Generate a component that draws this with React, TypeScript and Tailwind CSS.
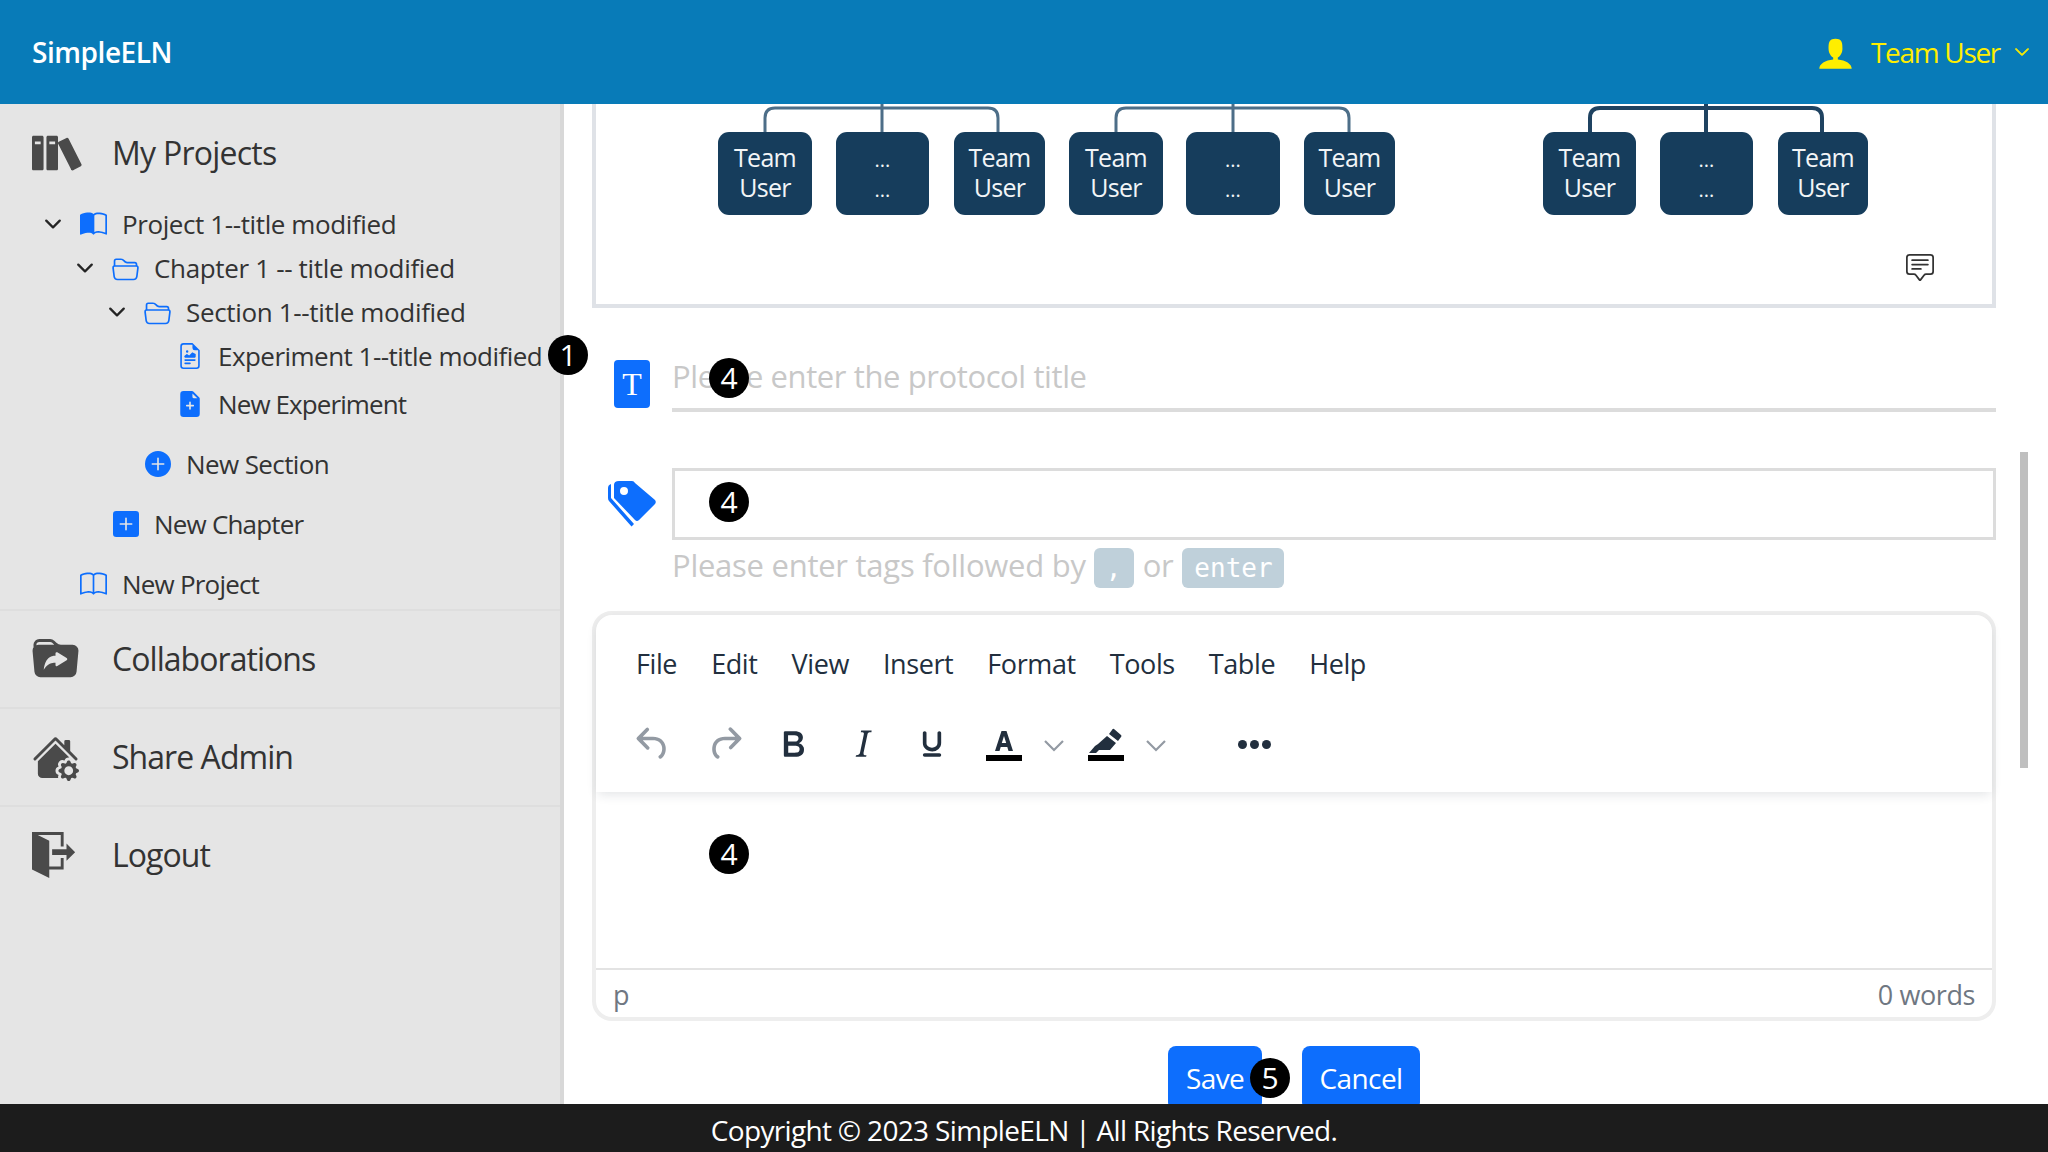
import type { ReactNode } from 'react';
import { ImBooks, ImExit, ImUser } from 'react-icons/im';
import {
  BsBook, BsBookHalf, BsChatSquareText, BsChevronDown, BsFileEarmarkPlusFill, BsFileEarmarkRichtext,
  BsFolder2Open, BsFolderSymlinkFill, BsHouseGearFill, BsPlusCircleFill, BsPlusSquareFill,
} from 'react-icons/bs';

const Badge = ({ n, className }: { n: number; className: string }) => (
  <span className={`absolute flex h-10 w-10 items-center justify-center rounded-full bg-black text-[30px] leading-none tracking-normal text-white ${className}`}>
    {n}
  </span>
);

const TreeRow = ({ pad, chevron, icon, label, extra, children }: { pad: string; chevron?: boolean; icon: ReactNode; label: string; extra: string; children?: ReactNode }) => (
  <div className={`relative flex h-11 items-center text-[26px] text-[#333] ${pad} ${extra}`}>
    <span className="flex w-5 justify-center text-[#222]">{chevron && <BsChevronDown size={18} strokeWidth={1} />}</span>
    <span className="ml-[17px] flex w-[27px] justify-center">{icon}</span>
    <span className="ml-[15px] whitespace-nowrap">{label}</span>
    {children}
  </div>
);

const SideItem = ({ icon, label }: { icon: ReactNode; label: string }) => (
  <div className="flex h-24 items-center pl-8 text-[32px] tracking-[-0.95px] text-[#333]">
    <span className="flex w-[80px] text-[#4a4a4a]">{icon}</span>
    {label}
  </div>
);

const teamBoxes = [
  { x: 122, w: 94, team: true }, { x: 240, w: 93, team: false }, { x: 358, w: 91, team: true },
  { x: 473, w: 94, team: true }, { x: 590, w: 94, team: false }, { x: 708, w: 91, team: true },
  { x: 947, w: 93, team: true }, { x: 1064, w: 93, team: false }, { x: 1182, w: 90, team: true },
];

const OrgChart = () => (
  <svg width="1396" height="200" viewBox="0 0 1396 200" className="block">
    <g fill="none" strokeWidth="3">
      <path d="M169 28V14q0-10 10-10H392q10 0 10 10V28M286 0V28" stroke="#4d6e88" />
      <path d="M520 28V14q0-10 10-10H743q10 0 10 10V28M637 0V28" stroke="#4d6e88" />
      <path d="M994 28V14q0-10 10-10H1216q10 0 10 10V28M1110 0V28" stroke="#1f4361" strokeWidth="4" />
    </g>
    {teamBoxes.map((b) => (
      <g key={b.x}>
        <rect x={b.x} y="28" width={b.w} height="83" rx="11" fill="#163d5c" />
        <text x={b.x + b.w / 2} y="63" textAnchor="middle" fill="#f2f5f7" fontSize={b.team ? 25 : 20} letterSpacing={b.team ? -0.7 : 0} fontFamily="Open Sans">{b.team ? 'Team' : '...'}</text>
        <text x={b.x + b.w / 2} y="93" textAnchor="middle" fill="#f2f5f7" fontSize={b.team ? 25 : 20} letterSpacing={b.team ? -0.7 : 0} fontFamily="Open Sans">{b.team ? 'User' : '...'}</text>
      </g>
    ))}
  </svg>
);

const Tiny = ({ d, color = '#222f3e' }: { d: string; color?: string }) => (
  <svg width="44" height="44" viewBox="0 0 24 24" fill={color}><path d={d} /></svg>
);

const menus = ['File', 'Edit', 'View', 'Insert', 'Format', 'Tools', 'Table', 'Help'];

const Caret = () => (
  <svg width="22" height="14" viewBox="0 0 22 14" fill="none" stroke="#939aa3" strokeWidth="2.2"><path d="M2 2l9 9 9-9" /></svg>
);

export default function App() {
  return (
    <div className="flex h-screen flex-col overflow-hidden bg-white font-['Open_Sans',sans-serif]">
      <header className="flex h-[104px] shrink-0 items-center justify-between bg-[#087bb8] pl-8 pr-[18px]">
        <span className="text-[28px] font-semibold tracking-[-0.45px] text-white">SimpleELN</span>
        <div className="flex items-center text-[28px] tracking-[-1.3px] text-[#ffee00]">
          <ImUser size={37} className="mr-[17px]" />
          Team User
          <BsChevronDown size={16} strokeWidth={1} className="ml-[14px]" />
        </div>
      </header>

      <div className="flex min-h-0 flex-1">
        <aside className="w-[564px] shrink-0 border-r-4 border-[#d8d8d8] bg-[#e5e5e5]">
          <div className="flex h-[98px] items-center pl-8 text-[32px] tracking-[-0.75px] text-[#333]">
            <span className="flex w-[80px] text-[#4a4a4a]"><ImBooks size={52} /></span>
            My Projects
          </div>
          <TreeRow pad="pl-[43px]" extra="tracking-[-0.4px]" chevron icon={<BsBookHalf size={27} className="text-[#0d6efd]" />} label="Project 1--title modified" />
          <TreeRow pad="pl-[75px]" extra="tracking-[-0.34px]" chevron icon={<BsFolder2Open size={27} className="text-[#0d6efd]" />} label="Chapter 1 -- title modified" />
          <TreeRow pad="pl-[107px]" extra="tracking-[-0.34px]" chevron icon={<BsFolder2Open size={27} className="text-[#0d6efd]" />} label="Section 1--title modified" />
          <TreeRow pad="pl-[139px]" extra="tracking-[-0.53px]" icon={<BsFileEarmarkRichtext size={26} className="text-[#0d6efd]" />} label="Experiment 1--title modified">
            <Badge n={1} className="left-[548px] top-[1px]" />
          </TreeRow>
          <TreeRow pad="pl-[139px]" extra="mt-1 tracking-[-0.9px]" icon={<BsFileEarmarkPlusFill size={26} className="text-[#0d6efd]" />} label="New Experiment" />
          <TreeRow pad="pl-[107px]" extra="mt-4 tracking-[-0.6px]" icon={<BsPlusCircleFill size={26} className="text-[#0d6efd]" />} label="New Section" />
          <TreeRow pad="pl-[75px]" extra="mt-4 tracking-[-0.8px]" icon={<BsPlusSquareFill size={26} className="text-[#0d6efd]" />} label="New Chapter" />
          <TreeRow pad="pl-[43px]" extra="mt-4 tracking-[-0.8px]" icon={<BsBook size={27} className="text-[#0d6efd]" />} label="New Project" />
          <div className="mt-[3px] h-0.5 bg-[#dedede]" />
          <SideItem icon={<BsFolderSymlinkFill size={47} />} label="Collaborations" />
          <div className="h-0.5 bg-[#dedede]" />
          <SideItem icon={<BsHouseGearFill size={47} />} label="Share Admin" />
          <div className="h-0.5 bg-[#dedede]" />
          <SideItem icon={<ImExit size={46} />} label="Logout" />
        </aside>

        <main className="relative min-w-0 flex-1 overflow-hidden pl-7 pr-[52px]">
          <div className="relative h-[204px] border-x-4 border-b-4 border-[#dfe2e7]">
            <OrgChart />
            <BsChatSquareText size={28} className="absolute left-[1310px] top-[150px] text-[#333]" />
          </div>

          <div className="relative mt-11 flex items-start pl-[22px]">
            <span className="mt-2 flex h-12 w-9 items-center justify-center rounded-[4px] bg-[#0d6efd] font-['Liberation_Serif',serif] text-[32px] leading-none text-white">T</span>
            <input
              readOnly
              placeholder="Please enter the protocol title"
              className="ml-[22px] h-[60px] w-[1324px] border-b-4 border-[#dcdcdc] bg-white pb-2 text-[31px] tracking-[-0.4px] outline-none placeholder:text-[#c8c8c8]"
            />
            <Badge n={4} className="left-[117px] top-[6px]" />
          </div>

          <div className="relative mt-14 flex items-center pl-4">
            <svg width="48" height="46" viewBox="0 0 48 46" fill="#0d6efd" className="shrink-0">
              <path fillRule="evenodd" d="M11 0H24Q26 0 27 2L47 19Q48.500 21 47 23L31 39Q29 41 27 39L6 17V4Q6 0 11 0ZM16 6A4 4 0 1 0 16 14 4 4 0 1 0 16 6Z" />
              <path d="M3 3V17L26 43 23.500 45.500 1 20Q0 19 0 17V7Q0 4 3 3Z" />
            </svg>
            <div className="ml-4 h-[72px] w-[1324px] border-[3px] border-[#dcdcdc]" />
            <Badge n={4} className="left-[117px] top-[14px]" />
          </div>

          <div className="mt-2 flex h-10 items-center pl-20 text-[31px] tracking-[-0.26px] text-[#c8c8c8]">
            <span className="-translate-y-[3px]">Please enter tags followed by</span>
            <span className="ml-2 flex h-10 w-10 items-center justify-center rounded-[6px] bg-[#bfd0da] font-['DejaVu_Sans_Mono',monospace] text-[26px] tracking-normal text-white">,</span>
            <span className="mx-[9px] -translate-y-[3px]">or</span>
            <span className="flex h-10 w-[102px] items-center justify-center rounded-[6px] bg-[#bfd0da] font-['DejaVu_Sans_Mono',monospace] text-[26px] tracking-normal text-white">enter</span>
          </div>

          <div className="relative mt-[23px] h-[410px] rounded-[20px] border-4 border-[#eeeeee] text-[#222f3e]">
            <div className="h-[177px] rounded-t-[16px] shadow-[0_4px_12px_-2px_rgba(34,47,62,0.14)]">
              <div className="flex h-[100px] items-center gap-[34px] pb-[2px] pl-[40px] text-[27px] tracking-[-0.4px]">
                {menus.map((m) => <span key={m}>{m}</span>)}
              </div>
              <div className="flex h-[58px] items-center pl-[35px]">
                <span className="flex w-[72px]"><Tiny color="#939aa3" d="M6.4 8H12c3.7 0 6.2 2 6.8 5.1.6 2.7-.4 5.6-2.3 6.8a1 1 0 0 1-1-1.8c1.1-.6 1.8-2.7 1.4-4.6-.5-2.1-2.1-3.5-4.9-3.5H6.4l3.3 3.3a1 1 0 1 1-1.4 1.4l-5-5a1 1 0 0 1 0-1.4l5-5a1 1 0 0 1 1.4 1.4L6.4 8Z" /></span>
                <span className="flex w-[68px]"><Tiny color="#939aa3" d="M17.6 10H12c-2.8 0-4.4 1.4-4.9 3.5-.4 2 .3 4 1.4 4.6a1 1 0 1 1-1 1.8c-2-1.2-2.9-4.1-2.3-6.8.6-3 3-5.1 6.8-5.1h5.6l-3.3-3.3a1 1 0 1 1 1.4-1.4l5 5a1 1 0 0 1 0 1.4l-5 5a1 1 0 0 1-1.4-1.4l3.3-3.3Z" /></span>
                <span className="flex w-[70px]"><Tiny d="M7.8 19c-.3 0-.5 0-.6-.2l-.2-.5V5.7c0-.2 0-.4.2-.5l.6-.2h5c1.5 0 2.7.3 3.5 1 .7.6 1.1 1.4 1.1 2.5a3 3 0 0 1-.6 1.9c-.4.6-1 1-1.6 1.2.4.1.9.3 1.3.6s.8.7 1 1.2c.4.4.5 1 .5 1.6 0 1.3-.4 2.3-1.3 3-.8.7-2.1 1-3.8 1H7.8Zm5-8.3c.6 0 1.2-.1 1.6-.5.4-.3.6-.7.6-1.3 0-1.1-.8-1.7-2.3-1.7H9.3v3.5h3.4Zm.5 6c.7 0 1.3-.1 1.7-.4.4-.4.6-.9.6-1.500s-.2-1-.7-1.400c-.4-.3-1-.4-2-.4H9.4v3.8h4Z" /></span>
                <span className="flex w-[69px]"><Tiny d="m16.7 4.7-.1.9h-.3c-.6 0-1 0-1.4.3-.3.3-.4.6-.5 1.1l-2.1 9.8v.6c0 .5.4.8 1.4.8h.2l-.2.8H8l.2-.8h.2c1.1 0 1.8-.5 2-1.5l2-9.8.1-.5c0-.6-.4-.8-1.4-.8h-.3l.2-.9h5.8Z" /></span>
                <span className="flex w-[75px]"><Tiny d="M16 5c.6 0 1 .4 1 1v5.5a4 4 0 0 1-.4 1.8l-1 1.4a5.3 5.3 0 0 1-5.5 1 5 5 0 0 1-1.6-1c-.5-.4-.8-.9-1.1-1.4a4 4 0 0 1-.4-1.8V6c0-.6.4-1 1-1s1 .4 1 1v5.5c0 .3 0 .6.2 1l.6.7a3.3 3.3 0 0 0 2.2.8 3.4 3.4 0 0 0 2.2-.8c.3-.2.4-.5.6-.8l.2-.9V6c0-.6.4-1 1-1ZM8 17h8c.6 0 1 .4 1 1s-.4 1-1 1H8a1 1 0 0 1 0-2Z" /></span>
                <span className="flex w-[58px] pt-[2px]">
                  <svg width="38" height="34" viewBox="0 0 38 34" fill="#222f3e">
                    <path fillRule="evenodd" d="M16.500 3h5L28 23h-4.500l-1.200-4h-6.600l-1.200 4H10L16.500 3Zm2.500 5-2.200 7h4.400L19 8Z" />
                    <rect x="1" y="27" width="36" height="6" fill="#000" />
                  </svg>
                </span>
                <span className="flex w-[44px] pt-1"><Caret /></span>
                <span className="flex w-[58px] pt-[2px]">
                  <svg width="38" height="34" viewBox="0 0 38 34" fill="#222f3e">
                    <path d="M27 1l7 6q1 1 0 2l-3 4-9-7 3-4q1-2 2-1Zm-7 7 9 7-6 7H12l-3 3H2l6-7 3-2 9-8Z" />
                    <rect x="1" y="27" width="36" height="6" fill="#000" />
                  </svg>
                </span>
                <span className="flex w-[22px] pt-1"><Caret /></span>
                <span className="ml-[71px] flex gap-[3px]">
                  <span className="h-[9px] w-[9px] rounded-full bg-[#222f3e]" />
                  <span className="h-[9px] w-[9px] rounded-full bg-[#222f3e]" />
                  <span className="h-[9px] w-[9px] rounded-full bg-[#222f3e]" />
                </span>
              </div>
            </div>
            <div className="h-[176px]" />
            <div className="flex h-[49px] items-center justify-between border-t-2 border-[#e3e3e3] px-[17px] pt-[4px] text-[27px] text-[#6f7782]">
              <span>p</span>
              <span className="tracking-[-0.4px]">0 words</span>
            </div>
            <Badge n={4} className="left-[113px] top-[219px]" />
          </div>

          <div className="mt-[25px] flex justify-center gap-10">
            <button className="relative h-16 w-[94px] rounded-lg bg-[#0d6efd] pl-[18px] text-left text-[28px] tracking-[-0.6px] text-white">
              Save
              <Badge n={5} className="left-[82px] top-[12px]" />
            </button>
            <button className="h-16 w-[118px] rounded-lg bg-[#0d6efd] text-[28px] tracking-[-0.6px] text-white">Cancel</button>
          </div>

          <div className="absolute left-[1456px] top-[348px] h-[316px] w-2 bg-[#bfbfbf]" />
        </main>
      </div>

      <footer className="relative flex h-12 shrink-0 items-center justify-center bg-[#1c1c1c] pt-[3px] text-[28px] tracking-[-0.67px] text-white">
        Copyright © 2023 SimpleELN | All Rights Reserved.
      </footer>
    </div>
  );
}
